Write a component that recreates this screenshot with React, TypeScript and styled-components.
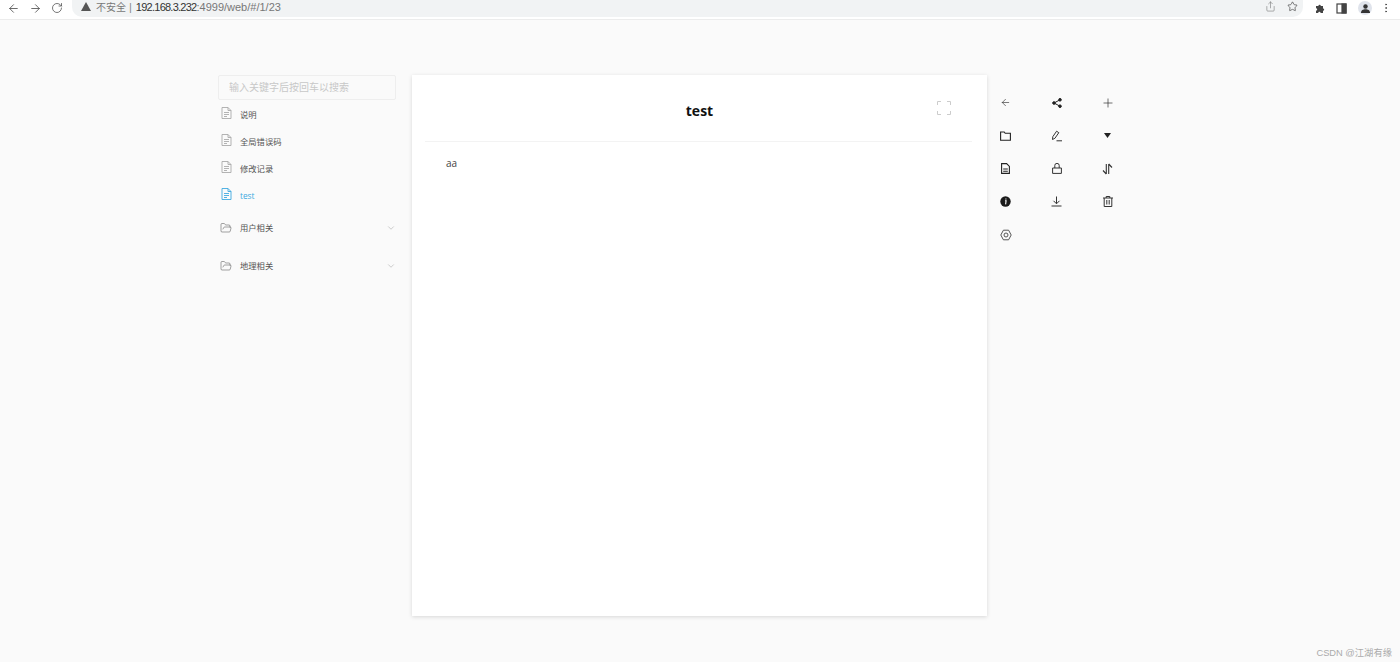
import styled, { createGlobalStyle } from 'styled-components';
import {
  ArrowLeft,
  ArrowRight,
  ChevronDown,
  EllipsisVertical,
  FolderOpen,
  Plus,
  RotateCw,
  Share,
  Star,
} from 'lucide-react';

const GlobalStyle = createGlobalStyle`
  html, body {
    margin: 0;
    height: 100%;
    background: #fafafa;
    font-family: "Liberation Sans", "Noto Sans CJK SC", sans-serif;
  }
`;

const docs = [
  { title: '说明', active: false },
  { title: '全局错误码', active: false },
  { title: '修改记录', active: false },
  { title: 'test', active: true },
];

const folders = ['用户相关', '地理相关'];

function DocIcon({ color }: { color: string }) {
  return (
    <svg width="11" height="12" viewBox="0 0 11 12" fill="none" stroke={color} strokeWidth="0.9">
      <path d="M1 .5h6l3 3v8H1z" />
      <path d="M7 .5v3h3M3 5.500h5M3 7.500h5M3 9.500h3" />
    </svg>
  );
}

const tools = [
  <ArrowLeft key="back" size={11} strokeWidth={1.3} />,
  <svg key="share" width="10" height="10" viewBox="0 0 10 10" fill="#222" stroke="#222">
    <circle cx="2" cy="5" r="1.3" />
    <circle cx="8" cy="1.8" r="1.3" />
    <circle cx="8" cy="8.2" r="1.3" />
    <path d="M2 5l6-3.200M2 5l6 3.200" fill="none" />
  </svg>,
  <Plus key="plus" size={14} strokeWidth={1.1} />,
  <svg key="folder" width="11" height="10" viewBox="0 0 11 10" fill="none" stroke="#222" strokeWidth="1.1">
    <path d="M.6 1h3.600l1 1.300h5.200v7H.6z" />
  </svg>,
  <svg key="edit" width="12" height="12" viewBox="0 0 12 12" fill="none" stroke="#333" strokeWidth="1">
    <path d="M1.500 9.500l.3-2.800L5.600 1.200l2.200 1.500L3.900 8.300zM5.500 10.800h5.500" />
  </svg>,
  <svg key="caret" width="7" height="5" viewBox="0 0 7 5" fill="#222">
    <path d="M0 0h7L3.500 5z" />
  </svg>,
  <svg key="file" width="9" height="11" viewBox="0 0 9 11" fill="none" stroke="#222" strokeWidth="1.1">
    <path d="M.6.6h5l2.800 2.800v7H.6zM2.200 6h4.600M2.200 8.200h4.600" />
  </svg>,
  <svg key="bag" width="10" height="11" viewBox="0 0 10 11" fill="none" stroke="#333" strokeWidth="1">
    <path d="M.6 10.400V5h8.800v5.400zM2.800 5V2.400a2.200 2 0 0 1 4.400 0V5" />
  </svg>,
  <svg key="swap" width="11" height="12" viewBox="0 0 11 12" fill="none" stroke="#333" strokeWidth="1.1">
    <path d="M4.300 1v10M4.300 11L1 7.500M6.700 11V1M6.700 1L10 4.500" />
  </svg>,
  <svg key="info" width="11" height="11" viewBox="0 0 11 11">
    <circle cx="5.500" cy="5.500" r="5.200" fill="#1b1b1b" />
    <path d="M5 4.800h1.100L5.600 8.300M5.900 2.500v1" stroke="#fff" strokeWidth="1.100" fill="none" />
  </svg>,
  <svg key="download" width="11" height="11" viewBox="0 0 11 11" fill="none" stroke="#333" strokeWidth="1">
    <path d="M5.500 .5v7M2.500 4.800l3 3 3-3M.5 10h10" />
  </svg>,
  <svg key="trash" width="10" height="11" viewBox="0 0 10 11" fill="none" stroke="#333" strokeWidth="1">
    <path d="M0 2h10M3.200 2V.5h3.600V2M1.200 2v8.500h7.600V2M3.800 4v4.500M6.200 4v4.500" />
  </svg>,
  <svg key="gear" width="12" height="12" viewBox="0 0 12 12" fill="none" stroke="#444" strokeWidth="0.9">
    <path d="M3.400 1.200h5.200L11.200 6 8.600 10.800H3.400L.8 6z" strokeLinejoin="round" />
    <circle cx="6" cy="6" r="2" />
  </svg>,
];

export default function App() {
  return (
    <>
      <GlobalStyle />
      <BrowserBar>
        <NavGroup>
          <ArrowLeft size={13} strokeWidth={1.6} />
          <ArrowRight size={13} strokeWidth={1.6} />
          <RotateCw size={12} strokeWidth={1.6} />
        </NavGroup>
        <AddressBar>
          <svg width="10" height="9" viewBox="0 0 10 9" fill="#555">
            <path d="M5 0l5 9H0z" />
          </svg>
          <Insecure>不安全</Insecure>
          <Divider>|</Divider>
          <Host>192.168.3.232</Host>
          <UrlPath>:4999/web/#/1/23</UrlPath>
          <AddressActions>
            <Share size={11} strokeWidth={1.3} color="#777" />
            <Star size={11} strokeWidth={1.5} color="#444" />
          </AddressActions>
        </AddressBar>
        <BarActions>
          <svg width="11" height="11" viewBox="0 0 11 11" fill="#444">
            <path d="M1 3h2.400a1.200 1.200 0 1 1 2.400 0H8v2.400a1.200 1.200 0 1 1 0 2.400V10H5.600a1.200 1.200 0 1 0-2.400 0H1V7.600a1.200 1.200 0 1 0 0-2.400z" />
          </svg>
          <svg width="11" height="11" viewBox="0 0 11 11" fill="none" stroke="#444" strokeWidth="1.2">
            <rect x="1" y="1" width="9" height="9" />
            <rect x="6" y="1" width="4" height="9" fill="#444" />
          </svg>
          <Avatar>
            <svg width="9" height="9" viewBox="0 0 9 9" fill="#333">
              <circle cx="4.500" cy="2.500" r="2.200" />
              <path d="M0 9c0-3 2-3.800 4.500-3.800S9 6 9 9z" />
            </svg>
          </Avatar>
          <EllipsisVertical size={12} strokeWidth={1.6} color="#444" />
        </BarActions>
      </BrowserBar>

      <Page>
        <Sidebar>
          <SearchBox placeholder="输入关键字后按回车以搜索" />
          <DocList>
            {docs.map((doc) => (
              <DocRow key={doc.title} $active={doc.active}>
                <IconSlot>
                  <DocIcon color={doc.active ? '#40a9e0' : '#aaa'} />
                </IconSlot>
                <DocLabel $active={doc.active}>{doc.title}</DocLabel>
              </DocRow>
            ))}
          </DocList>
          <FolderList>
            {folders.map((name) => (
              <FolderRow key={name}>
                <IconSlot>
                  <FolderOpen size={12} strokeWidth={1} color="#444" />
                </IconSlot>
                <FolderName>{name}</FolderName>
                <ChevronDown size={10} strokeWidth={1} color="#888" />
              </FolderRow>
            ))}
          </FolderList>
        </Sidebar>

        <DocCard>
          <DocHeader>
            <DocTitle>test</DocTitle>
            <Fullscreen>
              <svg width="14" height="14" viewBox="0 0 14 14" fill="none" stroke="#ccc" strokeWidth="1">
                <path d="M.5 4V.5H4M10 .5h3.500V4M13.500 10v3.500H10M4 13.500H.5V10" />
              </svg>
            </Fullscreen>
          </DocHeader>
          <DocBody>aa</DocBody>
        </DocCard>

        <ToolGrid>
          {tools.map((icon) => (
            <ToolCell key={icon.key}>{icon}</ToolCell>
          ))}
        </ToolGrid>
      </Page>

      <Watermark>CSDN @江湖有缘</Watermark>
    </>
  );
}

const BrowserBar = styled.header`
  display: flex;
  align-items: center;
  height: 16px;
  padding-bottom: 3px;
  background: #fff;
  border-bottom: 1px solid #ececec;
`;

const NavGroup = styled.div`
  display: flex;
  align-items: center;
  gap: 9px;
  width: 72px;
  padding-left: 7px;
  box-sizing: border-box;
  color: #555;
  flex-shrink: 0;
`;

const AddressBar = styled.div`
  display: flex;
  align-items: center;
  align-self: flex-start;
  flex: 1;
  height: 13px;
  padding: 0 5px 4px 9px;
  background: #f1f3f4;
  border-radius: 0 0 10px 10px;
  font-size: 11px;
`;

const Insecure = styled.span`
  margin-left: 5px;
  font-size: 10px;
  color: #777;
`;

const Divider = styled.span`
  margin: 0 4px 0 3px;
  color: #888;
`;

const Host = styled.span`
  letter-spacing: -0.75px;
  color: #333;
`;

const UrlPath = styled.span`
  color: #777;
`;

const AddressActions = styled.div`
  display: flex;
  align-items: center;
  gap: 11px;
  margin-left: auto;
`;

const BarActions = styled.div`
  display: flex;
  align-items: center;
  gap: 10px;
  width: 97px;
  padding-left: 12px;
  box-sizing: border-box;
  flex-shrink: 0;

  & > span {
    margin-left: 1px;
  }

  & > svg:last-child {
    margin-left: -2px;
  }
`;

const Avatar = styled.span`
  display: flex;
  align-items: center;
  justify-content: center;
  width: 14px;
  height: 14px;
  border-radius: 50%;
  background: #dfe3eb;
`;

const Page = styled.main`
  display: flex;
  align-items: flex-start;
  height: 642px;
  padding: 55px 0 0 218px;
  box-sizing: border-box;
`;

const Sidebar = styled.aside`
  width: 178px;
  flex-shrink: 0;
`;

const SearchBox = styled.input`
  display: block;
  width: 100%;
  height: 25px;
  padding: 0 10px;
  box-sizing: border-box;
  background: #fafafa;
  border: 1px solid #eeeeee;
  border-radius: 2px;
  font: 10px "Liberation Sans", "Noto Sans CJK SC", sans-serif;
  outline: none;

  &::placeholder {
    color: #c8c8c8;
    opacity: 1;
  }
`;

const DocList = styled.div`
  padding-top: 1px;
`;

const DocRow = styled.div<{ $active: boolean }>`
  display: flex;
  align-items: center;
  height: 27px;
  font-family: "Open Sans", "Noto Sans CJK SC", sans-serif;
  font-size: 8.3px;
  color: ${({ $active }) => ($active ? '#40a9e0' : '#555')};
`;

const DocLabel = styled.span<{ $active: boolean }>`
  padding-bottom: ${({ $active }) => ($active ? '0' : '2px')};
`;

const IconSlot = styled.span`
  display: flex;
  justify-content: center;
  width: 16px;
  margin: -3px 6px 0 0;
`;

const FolderList = styled.div`
  display: flex;
  flex-direction: column;
  gap: 16px;
  padding-top: 8px;
`;

const FolderRow = styled.div`
  display: flex;
  align-items: center;
  height: 22px;
  font-family: "Open Sans", "Noto Sans CJK SC", sans-serif;
  font-size: 8.3px;
  color: #555;

  ${IconSlot} {
    margin-top: -1px;
  }
`;

const FolderName = styled.span`
  flex: 1;
  padding-bottom: 2px;
`;

const DocCard = styled.article`
  width: 575px;
  height: 541px;
  margin-left: 16px;
  flex-shrink: 0;
  background: #fff;
  box-shadow: 0 1px 4px rgba(0, 0, 0, 0.14);
`;

const DocHeader = styled.div`
  position: relative;
  height: 66px;
  margin: 0 15px 0 13px;
  padding-left: 2px;
  border-bottom: 1px solid #f3f3f3;
  text-align: center;
`;

const DocTitle = styled.h1`
  margin: 0;
  padding-top: 27px;
  font-family: "Open Sans", sans-serif;
  font-size: 14px;
  line-height: 17px;
  font-weight: 700;
  color: #111;
`;

const Fullscreen = styled.span`
  position: absolute;
  top: 26px;
  right: 21px;
  line-height: 0;
`;

const DocBody = styled.div`
  padding: 14px 0 0 34px;
  font-family: "Open Sans", sans-serif;
  font-size: 10px;
  line-height: 14px;
  color: #444;
`;

const ToolGrid = styled.nav`
  display: grid;
  grid-template-columns: repeat(3, 51px);
  grid-auto-rows: 33px;
  margin: 11px 0 0 -7px;
`;

const ToolCell = styled.span`
  display: flex;
  align-items: center;
  justify-content: center;
  color: #222;
`;

const Watermark = styled.div`
  position: absolute;
  right: 8px;
  bottom: 3px;
  font-size: 9.3px;
  color: #aaa;
`;
